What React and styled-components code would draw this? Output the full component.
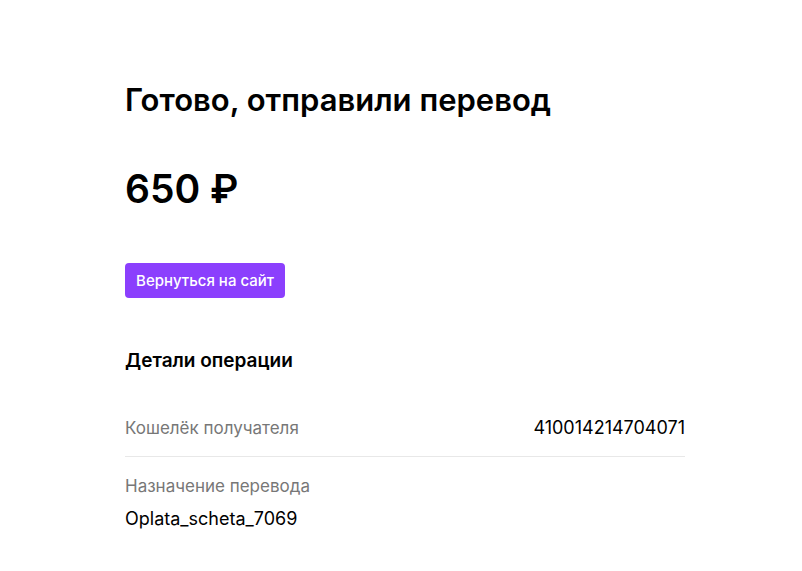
import React from 'react'
import styled, { createGlobalStyle } from 'styled-components'

const Global = createGlobalStyle`
  body {
    margin: 0;
    background: #fff;
    font-family: Inter, "Noto Sans", sans-serif;
    color: #000;
  }
`;

const Page = styled.div`
  width: 560px;
  padding: 80px 0 0 125px;
`;

const Title = styled.h1`
  margin: 0;
  font-size: 31px;
  line-height: 40px;
  font-weight: 600;
`;

const Amount = styled.div`
  margin-top: 41px;
  font-size: 39px;
  line-height: 56px;
  font-weight: 600;
`;

const BackButton = styled.button`
  display: block;
  margin-top: 46px;
  height: 35px;
  width: 160px;
  border: none;
  border-radius: 4px;
  background: #8b3ffd;
  color: #fff;
  font-family: inherit;
  font-size: 15px;
  font-weight: 500;
  cursor: pointer;
`;

const SectionTitle = styled.h2`
  margin: 51px 0 0;
  font-size: 19px;
  line-height: 24px;
  font-weight: 600;
`;

const Details = styled.div`
  margin-top: 28px;
`;

const Row = styled.div`
  display: flex;
  justify-content: space-between;
  align-items: center;
  padding: 16px 0 17px;
  font-size: 17px;
  line-height: 22px;
  border-bottom: ${p => (p.$divider ? '1px solid #e8e8e8' : 'none')};
`;

const Stack = styled.div`
  padding: 18px 0;
  display: flex;
  flex-direction: column;
  gap: 11px;
  font-size: 17px;
  line-height: 22px;
`;

const Label = styled.span`
  color: #777;
`;

const Value = styled.span`
  color: #000;
  font-size: 18px;
`;

export default function App() {
  return (
    <>
      <Global />
      <Page>
        <Title>Готово, отправили перевод</Title>
        <Amount>650 ₽</Amount>
        <BackButton>Вернуться на сайт</BackButton>
        <SectionTitle>Детали операции</SectionTitle>
        <Details>
          <Row $divider>
            <Label>Кошелёк получателя</Label>
            <Value>410014214704071</Value>
          </Row>
          <Stack>
            <Label>Назначение перевода</Label>
            <Value>Oplata_scheta_7069</Value>
          </Stack>
        </Details>
      </Page>
    </>
  )
}
